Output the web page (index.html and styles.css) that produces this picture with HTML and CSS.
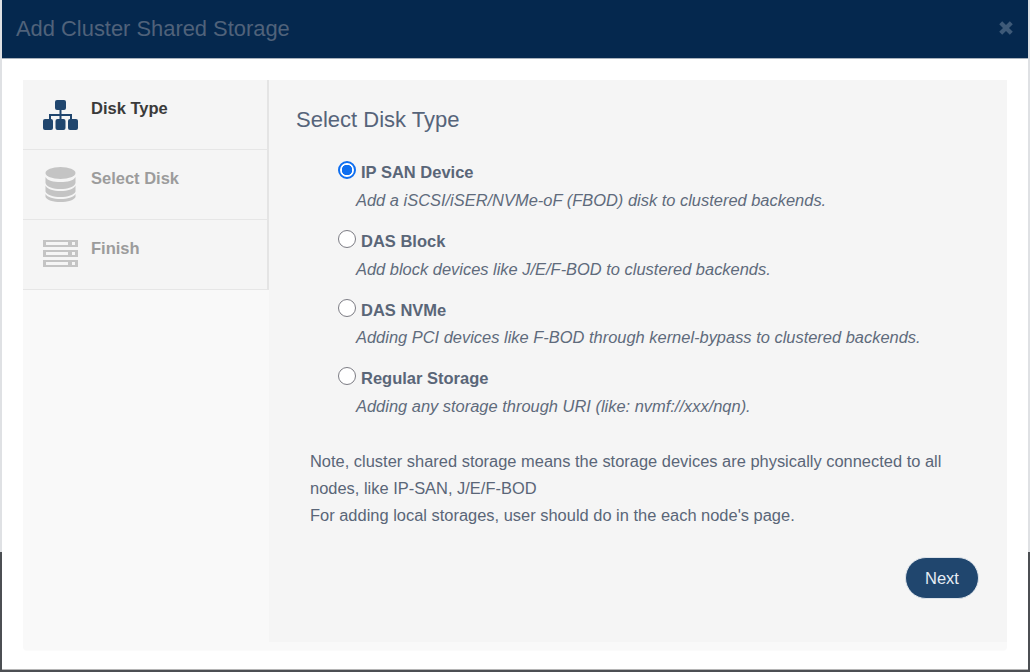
FILE: index.html
```html
<!DOCTYPE html>
<html lang="en">
<head>
<meta charset="utf-8">
<title>Add Cluster Shared Storage</title>
<link rel="stylesheet" href="styles.css">
</head>
<body>
<div class="modal">
  <header class="modal-header">
    <h1 class="modal-title">Add Cluster Shared Storage</h1>
    <svg class="close-icon" viewBox="0 0 16 16" aria-hidden="true"><path d="M1.200 4.200 4.200 1.200 8 5l3.800-3.800 3 3L11 8l3.800 3.800-3 3L8 11l-3.800 3.800-3-3L5 8z"/></svg>
  </header>
  <div class="modal-body">
    <div class="wizard">
      <nav class="steps">
        <div class="step step-active">
          <svg class="step-icon" viewBox="0 0 35 30" aria-hidden="true">
            <rect x="12" y="0" width="11" height="10" rx="2"/>
            <path d="M16.500 9h2v5H29v6h-2v-4H18.500v4h-2v-4H8v4H6v-6h10.500z"/>
            <rect x="0" y="19" width="10" height="11" rx="2"/>
            <rect x="12.500" y="19" width="10" height="11" rx="2"/>
            <rect x="25" y="19" width="10" height="11" rx="2"/>
          </svg>
          <span class="step-label">Disk Type</span>
        </div>
        <div class="step">
          <svg class="step-icon" viewBox="0 0 35 35" aria-hidden="true">
            <ellipse cx="17.500" cy="6" rx="15" ry="6"/>
            <path d="M2.500 10c2 4 8 5 15 5s13-1 15-5v6c-1 4-8 6-15 6s-14-2-15-6z"/>
            <path d="M2.500 18.500c2 4 8 5.500 15 5.500s13-1.500 15-5.500v6c-1 3.500-8 5.500-15 5.500s-14-2-15-5.500z"/>
            <path d="M2.500 27c2 3.500 8 5 15 5s13-1.500 15-5v3c-1 3-8 5-15 5s-14-2-15-5z"/>
          </svg>
          <span class="step-label">Select Disk</span>
        </div>
        <div class="step">
          <svg class="step-icon" viewBox="0 0 35 27" aria-hidden="true">
            <path fill-rule="evenodd" d="M0 0h35v7H0zM3 2v3h22V2zM29 2v3h3V2z"/>
            <path fill-rule="evenodd" d="M0 10h35v7H0zM3 12v3h22v-3zM29 12v3h3v-3z"/>
            <path fill-rule="evenodd" d="M0 20h35v7H0zM3 22v3h22v-3zM29 22v3h3v-3z"/>
          </svg>
          <span class="step-label">Finish</span>
        </div>
      </nav>
      <main class="panel">
        <h2 class="panel-title">Select Disk Type</h2>
        <div class="options">
          <label class="option">
            <span class="option-head"><input class="radio" type="radio" name="disk" checked><span class="option-name">IP SAN Device</span></span>
            <span class="option-desc">Add a iSCSI/iSER/NVMe-oF (FBOD) disk to clustered backends.</span>
          </label>
          <label class="option">
            <span class="option-head"><input class="radio" type="radio" name="disk"><span class="option-name">DAS Block</span></span>
            <span class="option-desc">Add block devices like J/E/F-BOD to clustered backends.</span>
          </label>
          <label class="option">
            <span class="option-head"><input class="radio" type="radio" name="disk"><span class="option-name">DAS NVMe</span></span>
            <span class="option-desc">Adding PCI devices like F-BOD through kernel-bypass to clustered backends.</span>
          </label>
          <label class="option">
            <span class="option-head"><input class="radio" type="radio" name="disk"><span class="option-name">Regular Storage</span></span>
            <span class="option-desc">Adding any storage through URI (like: nvmf://xxx/nqn).</span>
          </label>
        </div>
        <p class="note">Note, cluster shared storage means the storage devices are physically connected to all<br>nodes, like IP-SAN, J/E/F-BOD<br>For adding local storages, user should do in the each node's page.</p>
        <div class="actions"><button class="next" type="button">Next</button></div>
      </main>
    </div>
  </div>
</div>
</body>
</html>
```
FILE: styles.css
```css
* { box-sizing: border-box; }
html, body { height: 100%; }
body {
  margin: 0;
  padding: 0 2px 2px;
  background: linear-gradient(#dfe1e4 0 552px, #4c4f53 552px);
  font-family: "Liberation Sans", Arial, sans-serif;
  overflow: hidden;
}
.modal {
  height: 670px;
  background: #fff;
  display: flex;
  flex-direction: column;
  border-bottom: 1px solid #b5b5b5;
}
.modal-header {
  height: 59px;
  flex: none;
  background: #05284e;
  border-bottom: 1px solid #a9b2bd;
  display: flex;
  align-items: center;
  justify-content: space-between;
  padding: 0 14px 0 14px;
}
.modal-title {
  margin: 0;
  font-size: 21.900px;
  font-weight: 400;
  color: #50627a;
}
.close-icon { width: 16px; height: 16px; fill: #3e5a78; margin-top: -2px; }
.modal-body { flex: 1; padding: 21px 21px 19px; min-height: 0; }
.wizard {
  height: 100%;
  display: flex;
  background: #f9f9f9;
  border-radius: 4px;
  box-shadow: 0 1px 1px rgba(0,0,0,.02);
  padding-bottom: 8px;
}
.steps { width: 246px; flex: none; }
.step {
  height: 70px;
  display: flex;
  gap: 13px;
  padding: 20px 0 0 20px;
  background: #f5f5f5;
  border-right: 2px solid #e4e4e4;
  border-bottom: 1px solid #e6e6e6;
  font-size: 16.500px;
  font-weight: 700;
  color: #9c9c9c;
}
.step-icon { width: 35px; flex: none; fill: #c4c4c4; align-self: flex-start; }
.step:nth-child(1) .step-icon { height: 30px; }
.step:nth-child(2) .step-icon { height: 35px; margin-top: -3px; }
.step:nth-child(3) .step-icon { height: 27px; }
.step-active { color: #3a3a3a; }
.step-active .step-icon { fill: #20466e; }
.step-label { line-height: 16px; }
.panel {
  flex: 1;
  background: #f5f5f5;
  padding: 27px 27px 0 27px;
  color: #5a6678;
}
.panel-title {
  margin: 0;
  font-size: 22px;
  font-weight: 400;
  line-height: 26px;
  color: #56647a;
}
.options { margin: 26px 0 0 42px; display: flex; flex-direction: column; gap: 16.750px; }
.option { display: flex; flex-direction: column; height: 52px; }
.option-head { display: flex; align-items: center; gap: 5px; height: 24px; }
.radio {
  appearance: none;
  margin: 0;
  width: 18px;
  height: 18px;
  border: 1.500px solid #7c7c84;
  border-radius: 50%;
  background: #fff;
  flex: none;
  position: relative;
  top: -1px;
}
.radio:checked {
  border: 2px solid #0f6ff0;
  background: radial-gradient(circle, #0f6ff0 0 5px, #fff 5.500px);
}
.option-name { font-size: 16.500px; font-weight: 700; color: #5a6678; line-height: 20px; padding-top: 2px; }
.option-desc { margin: 7.750px 0 0 18px; font-size: 16.450px; font-style: italic; line-height: 18px; color: #5f6b7c; }
.note {
  margin: 30.750px 0 0 14px;
  font-size: 16.450px;
  line-height: 27px;
  color: #5a6678;
}
.actions { display: flex; justify-content: flex-end; margin: 28px 1px 0 0; }
.next {
  width: 74px;
  height: 42px;
  border: 1px solid #dde3ea;
  border-radius: 21px;
  background: #20466e;
  color: #e6edf4;
  font: 400 16.500px "Liberation Sans", Arial, sans-serif;
}
```
